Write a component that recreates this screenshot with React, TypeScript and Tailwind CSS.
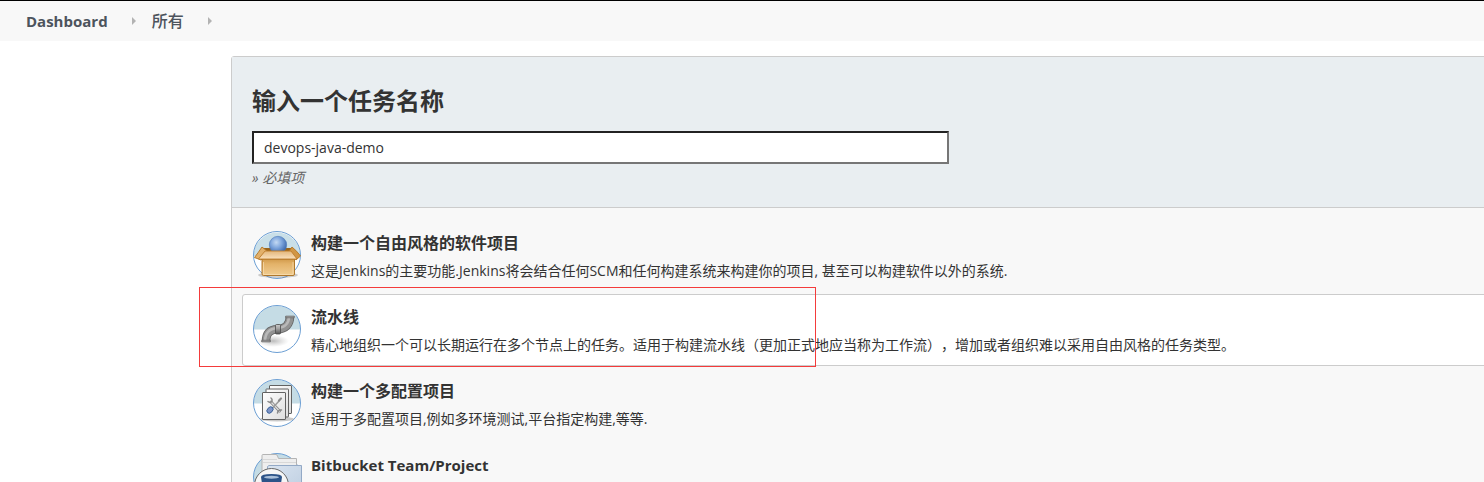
import type { ReactNode } from "react";

function BoxIcon() {
  return (
    <svg viewBox="0 0 48 48" className="size-12 shrink-0 overflow-visible" aria-hidden="true">
      <defs>
        <radialGradient id="ball" cx="0.4" cy="0.35" r="0.65">
          <stop offset="0" stopColor="#c3d9f3" />
          <stop offset="0.5" stopColor="#7da5dc" />
          <stop offset="1" stopColor="#3d69ad" />
        </radialGradient>
        <linearGradient id="carton" x1="0" y1="0" x2="0" y2="1">
          <stop offset="0" stopColor="#d19a4b" />
          <stop offset="0.3" stopColor="#e3b269" />
          <stop offset="1" stopColor="#f0cc90" />
        </linearGradient>
        <linearGradient id="flap" x1="0" y1="0" x2="0" y2="1">
          <stop offset="0" stopColor="#e3b67a" />
          <stop offset="1" stopColor="#fae1bd" />
        </linearGradient>
      </defs>
      <circle cx="24" cy="24" r="23.5" fill="#fff" />
      <path d="M.5 25a23.5 23.5 0 1 1 47 0z" fill="#c9dfe8" />
      <circle cx="24" cy="24" r="23.5" fill="none" stroke="#6c9fd4" />
      <ellipse cx="25" cy="44" rx="20" ry="3" fill="#777" opacity="0.35" />
      <path d="M9 17L39 17L41 29H8z" fill="#9b6519" />
      <path d="M9 16L14 20L8 29L1.5 26.5Q5 22 9 16z" fill="#e2b06a" stroke="#b17422" strokeWidth="0.9" />
      <path d="M39 16L36 20L43 29L47.5 25Q44 20 39 16z" fill="#d19645" stroke="#b17422" strokeWidth="0.9" />
      <circle cx="25" cy="14" r="8.7" fill="url(#ball)" stroke="#4e7abb" strokeWidth="0.6" />
      <path d="M9 28h32.5v15q0 1.5-1.5 1.5H10.5q-1.5 0-1.5-1.5z" fill="url(#carton)" stroke="#a96e1d" strokeWidth="0.9" />
      <path d="M10.5 31v12.5H40V31" fill="none" stroke="#f9dfb4" strokeWidth="0.7" />
      <path d="M12 20H38L44 28H5.5z" fill="url(#flap)" stroke="#bd7d2c" strokeWidth="0.9" />
    </svg>
  );
}

function PipeIcon() {
  return (
    <svg viewBox="0 0 48 48" className="size-12 shrink-0 overflow-visible" aria-hidden="true">
      <defs>
        <radialGradient id="pipeShadow">
          <stop offset="0" stopColor="#777" stopOpacity="0.5" />
          <stop offset="1" stopColor="#999" stopOpacity="0" />
        </radialGradient>
        <linearGradient id="collar" x1="0" y1="0" x2="0" y2="1">
          <stop offset="0" stopColor="#ccc" />
          <stop offset="0.4" stopColor="#a5a5a5" />
          <stop offset="1" stopColor="#555" />
        </linearGradient>
      </defs>
      <circle cx="24" cy="24" r="23.5" fill="#fff" />
      <path d="M.5 24.5a23.5 23.5 0 1 1 47 0z" fill="#c5dce5" />
      <circle cx="24" cy="24" r="23.5" fill="none" stroke="#6c9fd4" />
      <ellipse cx="20" cy="36" rx="16" ry="6" fill="url(#pipeShadow)" />
      <g fill="none">
        <path d="M13 37C13 28 17 24.5 24.5 24.3S37 20 37 11" stroke="#626262" strokeWidth="8.6" />
        <path d="M13 36.5C13 28 17 24.5 24.5 24.3S37 20 37 11.5" stroke="#929292" strokeWidth="7" />
        <path d="M12 36.5C12 27.5 16 23.5 24 23.2S36 18 36 11.5" stroke="#b8b8b8" strokeWidth="2.6" />
      </g>
      <path d="M32.7 11h8.6v1.8h-8.6zM8.700 35.200h8.600V37H8.700z" fill="#9a9a9a" stroke="#555" strokeWidth="0.5" />
      <rect x="22.500" y="19.500" width="5" height="9.500" rx="1" fill="url(#collar)" stroke="#4b4b4b" strokeWidth="0.8" />
    </svg>
  );
}

function MatrixIcon() {
  return (
    <svg viewBox="0 0 48 48" className="size-12 shrink-0 overflow-visible" aria-hidden="true">
      <defs>
        <linearGradient id="sheet" x1="0" y1="0" x2="1" y2="1">
          <stop offset="0" stopColor="#fff" />
          <stop offset="1" stopColor="#dedede" />
        </linearGradient>
      </defs>
      <circle cx="24" cy="24" r="23.5" fill="#fff" />
      <path d="M.5 24.5a23.5 23.5 0 1 1 47 0z" fill="#c5dce5" />
      <circle cx="24" cy="24" r="23.5" fill="none" stroke="#6c9fd4" />
      <ellipse cx="24" cy="40" rx="17" ry="2.5" fill="#666" opacity="0.35" />
      <g fill="url(#sheet)" stroke="#626262">
        <rect x="16.500" y="6.500" width="22" height="28" rx="0.5" />
        <rect x="13" y="10" width="22.5" height="28" rx="0.5" />
        <rect x="9.500" y="13.500" width="23" height="27" rx="0.5" />
      </g>
      <g fill="none" strokeLinecap="round">
        <path d="M18 23l8.500 9" stroke="#828282" strokeWidth="3" />
        <path d="M18 23l8.500 9" stroke="#dcdcdc" strokeWidth="1.4" />
        <path d="M15 22.500q2.500 2 4-.5.5-2-1-3M24.500 34q.500-3.500 4-3" stroke="#8a8a8a" strokeWidth="1.500" />
        <path d="M26.500 21.500L20 28.500" stroke="#999" strokeWidth="1.500" />
        <path d="M26 21.500l2-2" stroke="#888" strokeWidth="2.200" />
      </g>
      <ellipse cx="17" cy="31" rx="2.600" ry="3.600" transform="rotate(42 17 31)" fill="#7d94c6" stroke="#375f97" strokeWidth="0.9" />
    </svg>
  );
}

function BitbucketIcon() {
  return (
    <svg viewBox="0 0 48 48" className="size-12 shrink-0 overflow-visible" aria-hidden="true">
      <defs>
        <linearGradient id="folder" x1="0" y1="0" x2="1" y2="1">
          <stop offset="0" stopColor="#dae4f0" />
          <stop offset="1" stopColor="#bccde0" />
        </linearGradient>
      </defs>
      <circle cx="24" cy="24" r="23.5" fill="#c5dce5" stroke="#6c9fd4" />
      <path d="M9 40V2.500q0-1 1-1H23q1 0 1.500 1.500l1 2.500H43.500V40z" fill="#eee" stroke="#b4b4b4" />
      <path d="M10 6.500h14M10 9.500h33" stroke="#d8d8d8" />
      <path d="M14.500 40V13.500l1.500-1H48.500V43H14.500z" fill="url(#folder)" stroke="#93a9c6" />
      <circle cx="18.500" cy="32.500" r="17" fill="#f6f6f6" stroke="#686868" />
      <path d="M8 24q0-3 10.500-3T29 24l-2.500 16H10.500z" fill="#2c5388" />
      <ellipse cx="18.500" cy="24.200" rx="7.500" ry="1.500" fill="#a9bfd9" />
    </svg>
  );
}

interface Job {
  id: string;
  title: string;
  titleSize: string;
  description: string;
  icon: ReactNode;
  highlighted?: boolean;
}

const jobs: Job[] = [
  {
    id: "freestyle",
    title: "构建一个自由风格的软件项目",
    titleSize: "text-base",
    description:
      "这是Jenkins的主要功能.Jenkins将会结合任何SCM和任何构建系统来构建你的项目, 甚至可以构建软件以外的系统.",
    icon: <BoxIcon />,
  },
  {
    id: "pipeline",
    title: "流水线",
    titleSize: "text-base",
    description:
      "精心地组织一个可以长期运行在多个节点上的任务。适用于构建流水线（更加正式地应当称为工作流），增加或者组织难以采用自由风格的任务类型。",
    icon: <PipeIcon />,
    highlighted: true,
  },
  {
    id: "matrix",
    title: "构建一个多配置项目",
    titleSize: "text-base",
    description: "适用于多配置项目,例如多环境测试,平台指定构建,等等.",
    icon: <MatrixIcon />,
  },
  {
    id: "bitbucket",
    title: "Bitbucket Team/Project",
    titleSize: "text-[15px]",
    description: "",
    icon: <BitbucketIcon />,
  },
];

function Arrow() {
  return (
    <svg viewBox="0 0 4 8" className="h-2 w-1 shrink-0" aria-hidden="true">
      <path d="M0 0l4 4-4 4z" fill="#b3b3b3" />
    </svg>
  );
}

function JobOption({ job }: { job: Job }) {
  return (
    <li className="relative">
      <label className="flex h-[72px] gap-[10px] rounded-[3px] border border-transparent p-[10px] has-checked:border-[#ccc] has-checked:bg-white">
        <input
          type="radio"
          name="job"
          value={job.id}
          defaultChecked={job.id === "pipeline"}
          className="sr-only"
        />
        {job.icon}
        <span className="flex flex-col whitespace-nowrap">
          <span className={`${job.titleSize} leading-6 font-bold`}>{job.title}</span>
          <span className="mt-1 text-sm leading-6">{job.description}</span>
        </span>
      </label>
      {job.highlighted && (
        <span className="pointer-events-none absolute -top-[7px] -left-[43px] h-20 w-[617px] border border-[#f43b3b]" />
      )}
    </li>
  );
}

export default function App() {
  return (
    <div
      lang="zh-CN"
      className="h-screen overflow-hidden bg-white font-['Open_Sans','Noto_Sans_CJK_SC',sans-serif] text-[#333] [text-spacing-trim:space-all]"
    >
      <nav
        aria-label="Breadcrumb"
        className="flex h-[41px] items-center border-t border-black bg-[#f8f8f8] pl-[26px] text-[#4d545d]"
      >
        <a href="#dashboard" className="mr-6 text-[15px] font-bold">
          Dashboard
        </a>
        <Arrow />
        <a href="#all" className="mr-6 ml-4 text-base font-medium">
          所有
        </a>
        <Arrow />
      </nav>
      <main className="mt-[15px] -mr-4 ml-[231px] rounded-[3px] border border-[#ccc] bg-[#f8f8f8]">
        <header className="h-[151px] border-b border-[#ccc] bg-[#e9eef1] px-5 pt-[26px]">
          <label htmlFor="name" className="block text-2xl leading-9 font-bold">
            输入一个任务名称
          </label>
          <input
            id="name"
            type="text"
            defaultValue="devops-java-demo"
            className="mt-3 block h-[33px] w-[697px] border-2 border-t-[#222] border-r-[#767676] border-b-[#767676] border-l-[#222] bg-white px-[10px] text-sm outline-none"
          />
          <p className="mt-1 text-sm leading-5 text-[#666] italic">» 必填项</p>
        </header>
        <ul className="flex flex-col gap-[2px] px-[10px] pt-3">
          {jobs.map((job) => (
            <JobOption key={job.id} job={job} />
          ))}
        </ul>
      </main>
    </div>
  );
}
